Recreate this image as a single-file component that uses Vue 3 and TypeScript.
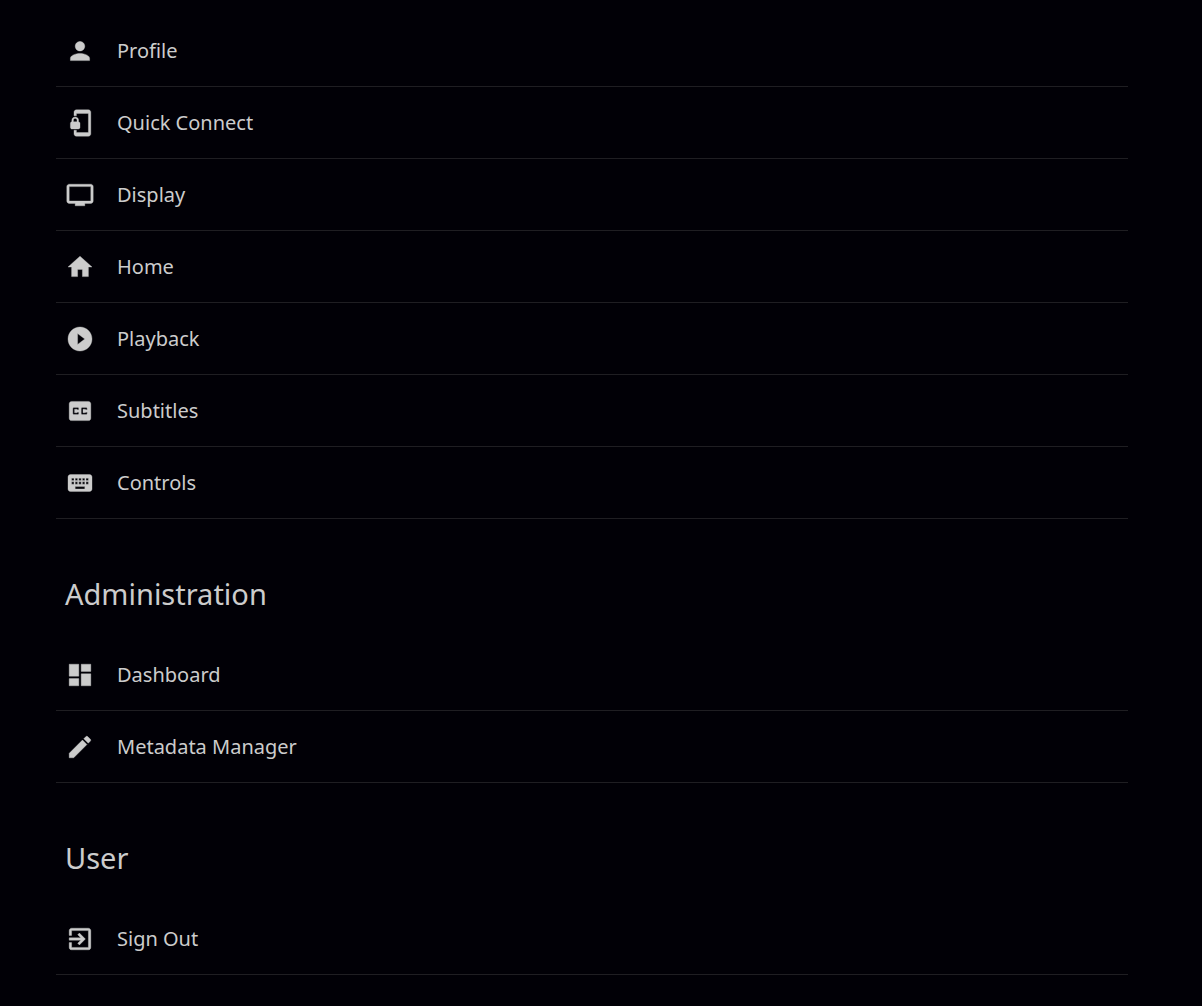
<script setup lang="ts">
interface MenuItem {
  label: string
  icon: string
}

interface MenuSection {
  title?: string
  items: MenuItem[]
}

const sections: MenuSection[] = [
  {
    items: [
      {
        label: 'Profile',
        icon: 'M12 12c2.21 0 4-1.79 4-4s-1.79-4-4-4-4 1.79-4 4 1.79 4 4 4zm0 2c-2.67 0-8 1.34-8 4v2h16v-2c0-2.66-5.33-4-8-4z',
      },
      {
        label: 'Quick Connect',
        icon: 'M19 1H9c-1.1 0-2 .9-2 2v3h2V4h10v16H9v-2H7v3c0 1.1.9 2 2 2h10c1.1 0 2-.9 2-2V3c0-1.1-.9-2-2-2zm-8.200 10V9.500C10.800 8.100 9.400 7 8 7S5.200 8.100 5.200 9.500V11c-.6 0-1.200.600-1.200 1.200v3.500c0 .7.600 1.300 1.200 1.300h5.500c.7 0 1.300-.600 1.300-1.200v-3.500c0-.7-.600-1.300-1.200-1.300zm-1.300 0h-3V9.500c0-.8.700-1.300 1.500-1.300s1.500.5 1.500 1.300V11z',
      },
      {
        label: 'Display',
        icon: 'M21 3H3c-1.1 0-2 .9-2 2v12c0 1.100.9 2 2 2h5v2h8v-2h5c1.100 0 1.990-.9 1.990-2L23 5c0-1.100-.9-2-2-2zm0 14H3V5h18v12z',
      },
      { label: 'Home', icon: 'M10 20v-6h4v6h5v-8h3L12 3 2 12h3v8z' },
      {
        label: 'Playback',
        icon: 'M12 2C6.480 2 2 6.480 2 12s4.480 10 10 10 10-4.480 10-10S17.520 2 12 2zm-2 14.500v-9l6 4.500-6 4.500z',
      },
      {
        label: 'Subtitles',
        icon: 'M19 4H5c-1.110 0-2 .9-2 2v12c0 1.100.890 2 2 2h14c1.100 0 2-.9 2-2V6c0-1.100-.9-2-2-2zm-8 7H9.500v-.5h-2v3h2V13H11v1c0 .550-.450 1-1 1H7c-.550 0-1-.450-1-1v-4c0-.550.450-1 1-1h3c.550 0 1 .450 1 1v1zm7 0h-1.500v-.5h-2v3h2V13H18v1c0 .550-.450 1-1 1h-3c-.550 0-1-.450-1-1v-4c0-.550.450-1 1-1h3c.550 0 1 .450 1 1v1z',
      },
      {
        label: 'Controls',
        icon: 'M20 5H4c-1.100 0-1.990.9-1.990 2L2 17c0 1.100.9 2 2 2h16c1.100 0 2-.9 2-2V7c0-1.100-.9-2-2-2zm-9 3h2v2h-2V8zm0 3h2v2h-2v-2zM8 8h2v2H8V8zm0 3h2v2H8v-2zm-1 2H5v-2h2v2zm0-3H5V8h2v2zm9 7H8v-2h8v2zm0-4h-2v-2h2v2zm0-3h-2V8h2v2zm3 3h-2v-2h2v2zm0-3h-2V8h2v2z',
      },
    ],
  },
  {
    title: 'Administration',
    items: [
      { label: 'Dashboard', icon: 'M3 13h8V3H3v10zm0 8h8v-6H3v6zm10 0h8V11h-8v10zm0-18v6h8V3h-8z' },
      {
        label: 'Metadata Manager',
        icon: 'M3 17.250V21h3.750L17.810 9.940l-3.750-3.750L3 17.250zM20.710 7.040c.390-.390.390-1.020 0-1.410l-2.340-2.340c-.390-.390-1.020-.390-1.410 0l-1.830 1.830 3.750 3.750 1.830-1.830z',
      },
    ],
  },
  {
    title: 'User',
    items: [
      {
        label: 'Sign Out',
        icon: 'M10.090 15.590L11.500 17l5-5-5-5-1.410 1.410L12.670 11H3v2h9.670l-2.580 2.590zM19 3H5c-1.110 0-2 .9-2 2v4h2V5h14v14H5v-4H3v4c0 1.100.890 2 2 2h14c1.100 0 2-.9 2-2V5c0-1.100-.9-2-2-2z',
      },
    ],
  },
]
</script>

<template>
  <main class="preferences">
    <section v-for="(section, index) in sections" :key="index">
      <h2 v-if="section.title" class="title">{{ section.title }}</h2>
      <a v-for="item in section.items" :key="item.label" href="#" class="row">
        <svg class="icon" viewBox="-0.5 -0.5 25 25" aria-hidden="true">
          <path :d="item.icon" />
        </svg>
        <span>{{ item.label }}</span>
      </a>
    </section>
  </main>
</template>

<style>
body {
  background: #010006;
}
</style>

<style scoped>
.preferences {
  padding: 15px 74px 30px 56px;
  color: #cccccc;
  font-family: "Noto Sans", "Open Sans", sans-serif;
}

.title {
  margin: 0;
  padding: 55px 9px 25px;
  font-size: 29px;
  font-weight: 400;
  line-height: 40px;
}

.row {
  display: flex;
  align-items: center;
  gap: 22px;
  padding: 20px 9px;
  border-bottom: 1px solid #1f1e22;
  color: inherit;
  font-size: 20px;
  line-height: 31px;
  text-decoration: none;
}

.icon {
  flex: none;
  width: 30px;
  height: 30px;
  fill: currentColor;
  stroke: currentColor;
  stroke-width: 0.3;
}
</style>
